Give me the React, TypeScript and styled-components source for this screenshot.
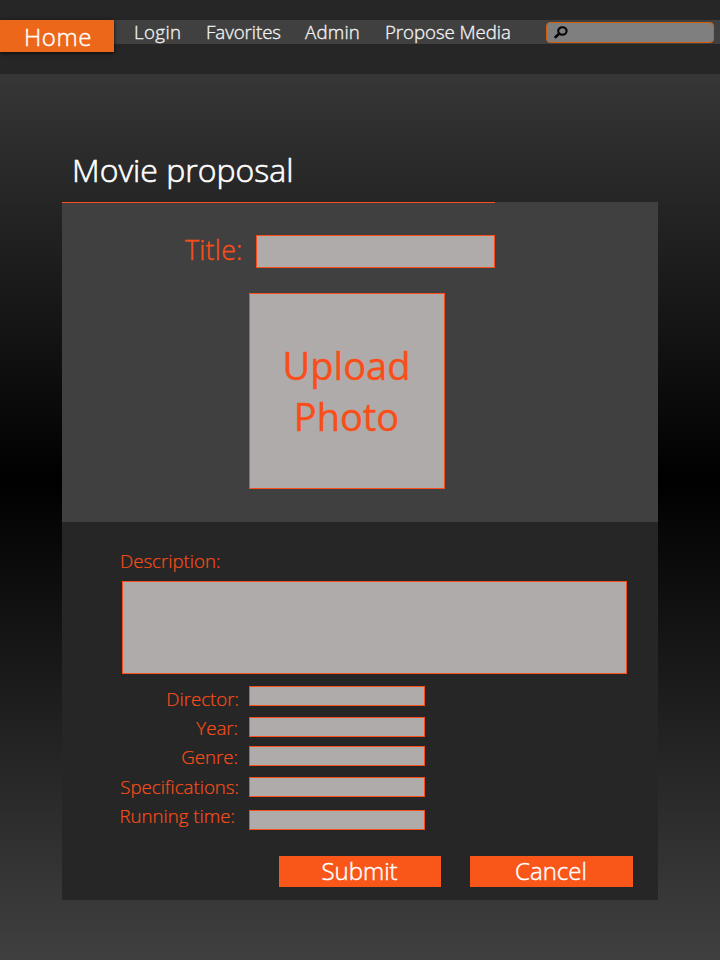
import React from "react";
import styled, { createGlobalStyle } from "styled-components";

const accent = "#f94e19";

const GlobalStyle = createGlobalStyle`
  *, *::before, *::after { box-sizing: border-box; }
  body { margin: 0; font-family: "Open Sans", "Noto Sans", sans-serif; }
`;

const Page = styled.div`
  width: 720px;
  height: 960px;
  overflow: hidden;
  background: linear-gradient(#404040, #000 50%, #404040);
`;

const Header = styled.header`
  height: 74px;
  padding-top: 20px;
  background: #262626;
`;

const NavBar = styled.nav`
  display: flex;
  align-items: flex-start;
  height: 24px;
  background: #404040;
`;

const HomeTab = styled.a`
  width: 114px;
  height: 32px;
  padding: 1px 0 0 24px;
  background: #ed671b;
  box-shadow: 0 1px 4px rgba(0, 0, 0, 0.8);
  color: #fff;
  font-size: 24px;
  font-weight: 300;
  line-height: 32px;
  letter-spacing: 0.6px;
  -webkit-text-stroke: 0.45px #fff;
`;

const NavLinks = styled.div`
  display: flex;
  width: 432px;
  padding-left: 20px;
`;

const NavLink = styled.a<{ $width: number; $tracking: number }>`
  width: ${(p) => p.$width}px;
  color: #f2f2f2;
  font-size: 18.67px;
  font-weight: 300;
  line-height: 24px;
  letter-spacing: ${(p) => p.$tracking}px;
  white-space: nowrap;
  -webkit-text-stroke: 0.35px #f2f2f2;
`;

const SearchBox = styled.div`
  width: 168px;
  height: 21px;
  margin-top: 2px;
  padding: 3px 0 0 7px;
  border: 1px solid #d0600f;
  border-radius: 4px;
  background: #7f7f7f;

  svg { display: block; }
`;

const Main = styled.main`
  width: 596px;
  margin: 0 auto;
`;

const Heading = styled.h1`
  height: 128px;
  margin: 0;
  padding: 75px 0 0 10px;
  color: #fff;
  font-size: 32px;
  font-weight: 300;
  line-height: 42px;
  -webkit-text-stroke: 0.6px #fff;
`;

const MediaPanel = styled.section`
  height: 320px;
  background: #404040;
`;

const Rule = styled.div`
  width: 433px;
  height: 1px;
  background: ${accent};
`;

const TitleRow = styled.label`
  display: flex;
  padding: 32px 0 0 123px;
`;

const TitleText = styled.span`
  width: 71px;
  color: ${accent};
  font-size: 26.67px;
  font-weight: 300;
  line-height: 30px;
  letter-spacing: 0.3px;
  -webkit-text-stroke: 0.4px ${accent};
`;

const Field = styled.input<{ $width: number; $height: number; $top?: number }>`
  display: block;
  width: ${(p) => p.$width}px;
  height: ${(p) => p.$height}px;
  margin: ${(p) => p.$top ?? 0}px 0 0;
  padding: 0 4px;
  border: 1px solid ${accent};
  border-radius: 0;
  outline: none;
  background: #afabaa;
`;

const UploadBox = styled.button`
  display: flex;
  align-items: center;
  justify-content: center;
  width: 196px;
  height: 196px;
  margin: 25px 0 0 187px;
  padding: 0 1px 0 0;
  border: 1px solid ${accent};
  background: #afabaa;
  color: ${accent};
  font: 400 38px/51px "Open Sans", "Noto Sans", sans-serif;
  -webkit-text-stroke: 0.4px ${accent};
`;

const DetailsPanel = styled.section`
  height: 378px;
  padding-top: 24px;
  background: #262626;
`;

const Label = styled.span`
  display: block;
  color: ${accent};
  font-size: 18.67px;
  font-weight: 300;
  line-height: 29px;
  white-space: nowrap;
  -webkit-text-stroke: 0.2px ${accent};
`;

const DescriptionGroup = styled.label`
  display: block;
  padding-left: 58px;
`;

const DescriptionArea = styled.textarea`
  display: block;
  width: 505px;
  height: 93px;
  margin: 6px 0 10px 2px;
  border: 1px solid ${accent};
  outline: none;
  resize: none;
  background: #afabaa;
`;

const DetailRow = styled.label<{ $height: number; $inset: number }>`
  display: flex;
  height: ${(p) => p.$height}px;

  ${Label} {
    width: 187px;
    padding-right: ${(p) => p.$inset}px;
    text-align: right;
  }
`;

const Actions = styled.div`
  display: flex;
  gap: 29px;
  padding: 26px 0 0 217px;
`;

const ActionButton = styled.button<{ $width: number }>`
  width: ${(p) => p.$width}px;
  height: 31px;
  padding: 0 1px 1px 0;
  border: 0;
  background: #f9561a;
  color: #fff;
  font: 300 24px/30px "Open Sans", "Noto Sans", sans-serif;
  -webkit-text-stroke: 0.45px #fff;
`;

const links = [
  { text: "Login", width: 72, tracking: 0.4 },
  { text: "Favorites", width: 99, tracking: -0.05 },
  { text: "Admin", width: 80, tracking: 0.2 },
  { text: "Propose Media", width: 130, tracking: -0.05 },
];

const details = [
  { text: "Director:", height: 29, inset: 10, top: 2 },
  { text: "Year:", height: 29, inset: 11, top: 4 },
  { text: "Genre:", height: 30, inset: 11, top: 4 },
  { text: "Specifications:", height: 29, inset: 10, top: 5 },
  { text: "Running time:", height: 29, inset: 14, top: 9 },
];

const SearchIcon = () => (
  <svg width="15" height="14" viewBox="0 0 15 14" fill="none" stroke="#050505" strokeLinecap="round">
    <ellipse cx="8.4" cy="5" rx="4.2" ry="3.7" strokeWidth="2.1" />
    <path d="M5.2 7.6 1.6 11" strokeWidth="2.6" />
  </svg>
);

export default function App() {
  return (
    <Page>
      <GlobalStyle />
      <Header>
        <NavBar>
          <HomeTab>Home</HomeTab>
          <NavLinks>
            {links.map((l) => (
              <NavLink key={l.text} $width={l.width} $tracking={l.tracking}>
                {l.text}
              </NavLink>
            ))}
          </NavLinks>
          <SearchBox>
            <SearchIcon />
          </SearchBox>
        </NavBar>
      </Header>
      <Main>
        <Heading>Movie proposal</Heading>
        <MediaPanel>
          <Rule />
          <TitleRow>
            <TitleText>Title:</TitleText>
            <Field $width={239} $height={33} />
          </TitleRow>
          <UploadBox>
            <span>
              Upload
              <br />
              Photo
            </span>
          </UploadBox>
        </MediaPanel>
        <DetailsPanel>
          <DescriptionGroup>
            <Label>Description:</Label>
            <DescriptionArea />
          </DescriptionGroup>
          {details.map((d) => (
            <DetailRow key={d.text} $height={d.height} $inset={d.inset}>
              <Label>{d.text}</Label>
              <Field $width={176} $height={20} $top={d.top} />
            </DetailRow>
          ))}
          <Actions>
            <ActionButton $width={162}>Submit</ActionButton>
            <ActionButton $width={163}>Cancel</ActionButton>
          </Actions>
        </DetailsPanel>
      </Main>
    </Page>
  );
}
